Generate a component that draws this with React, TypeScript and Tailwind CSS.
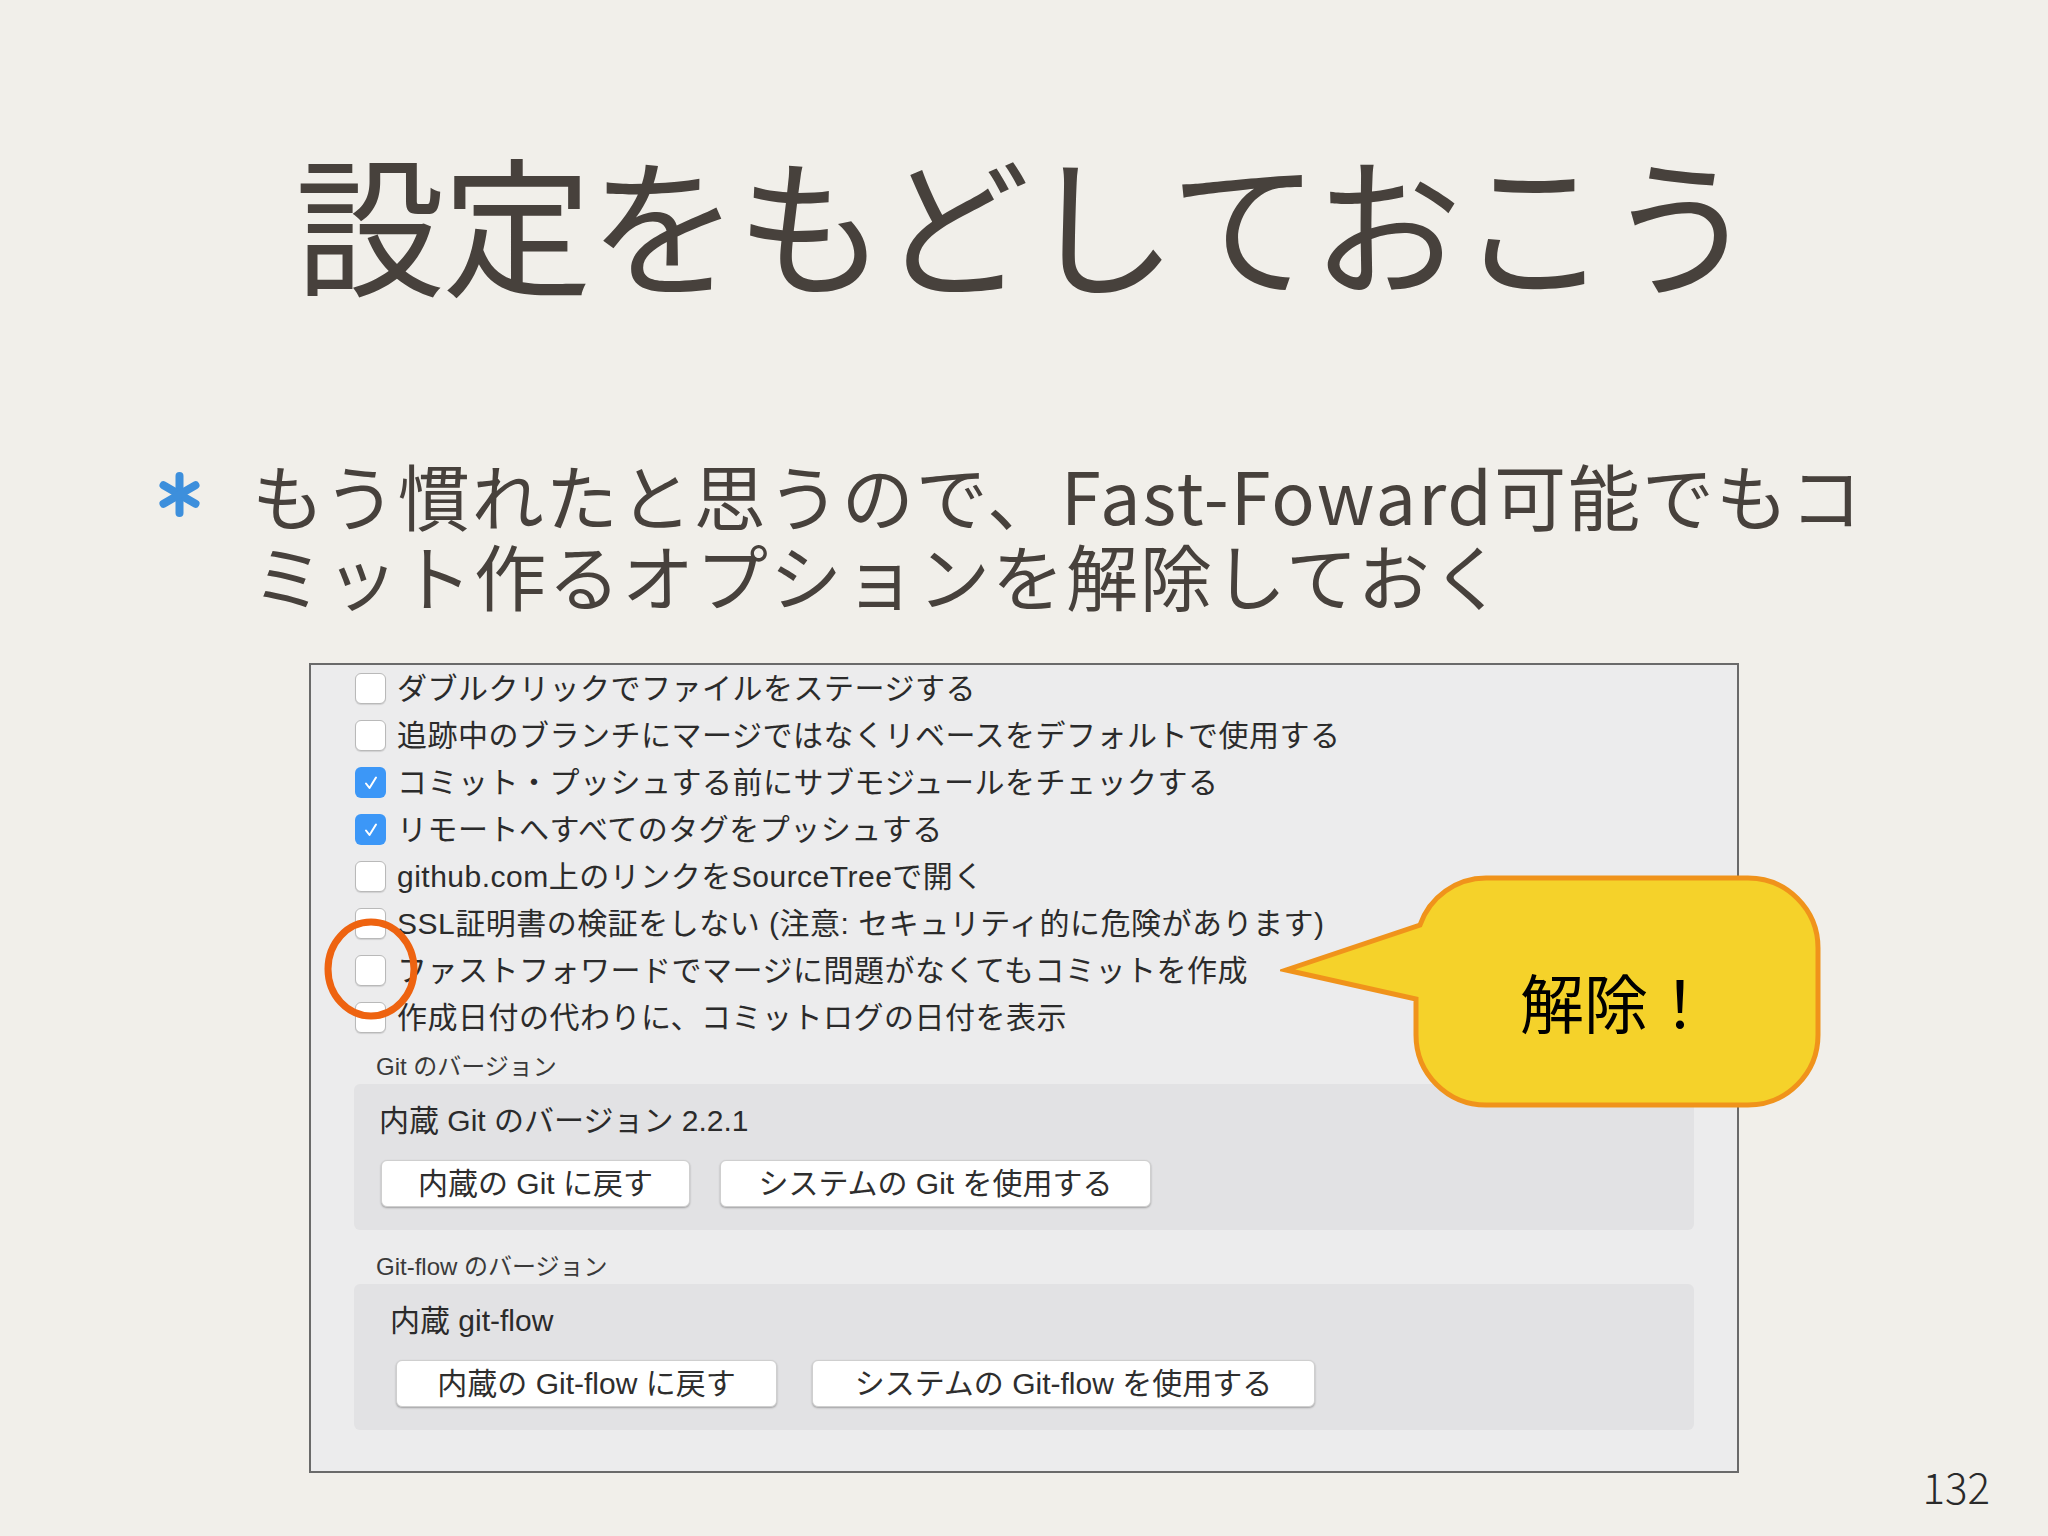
const rows = [
  { label: "ダブルクリックでファイルをステージする", checked: false },
  { label: "追跡中のブランチにマージではなくリベースをデフォルトで使用する", checked: false },
  { label: "コミット・プッシュする前にサブモジュールをチェックする", checked: true },
  { label: "リモートへすべてのタグをプッシュする", checked: true },
  { label: "github.com上のリンクをSourceTreeで開く", checked: false },
  { label: "SSL証明書の検証をしない (注意: セキュリティ的に危険があります)", checked: false },
  { label: "ファストフォワードでマージに問題がなくてもコミットを作成", checked: false },
  { label: "作成日付の代わりに、コミットログの日付を表示", checked: false },
];

function CheckBox({ checked }: { checked: boolean }) {
  if (checked) {
    return (
      <span className="flex h-[31px] w-[31px] shrink-0 items-center justify-center rounded-[6px] bg-[#3c97f7]">
        <svg viewBox="0 0 20 20" className="h-[20px] w-[20px]">
          <path d="M5 10.5 L8.5 15 L15 4.5" fill="none" stroke="white" strokeWidth="2" strokeLinecap="round" strokeLinejoin="round" />
        </svg>
      </span>
    );
  }
  return <span className="h-[31px] w-[31px] shrink-0 rounded-[6px] border border-[#b9b9b9] bg-white shadow-[0_1px_1px_rgba(0,0,0,0.12)]" />;
}

function Button({ label, width }: { label: string; width: string }) {
  return (
    <div
      className={`flex h-[47px] items-center justify-center rounded-[6px] border border-[#cfcfcf] bg-white text-[30px] text-[#2e2e2e] shadow-[0_1px_2px_rgba(0,0,0,0.3)] ${width}`}
    >
      {label}
    </div>
  );
}

function Asterisk() {
  return (
    <svg viewBox="0 0 45 45" className="mt-[18px] h-[45px] w-[45px] shrink-0">
      <g stroke="#3d8fdc" strokeWidth="8" strokeLinecap="round">
        <line x1="22.5" y1="4" x2="22.5" y2="41" />
        <line x1="6.5" y1="13.25" x2="38.5" y2="31.75" />
        <line x1="6.5" y1="31.75" x2="38.5" y2="13.25" />
      </g>
    </svg>
  );
}

export default function App() {
  return (
    <div className="relative h-[1536px] w-[2048px] overflow-hidden bg-[#f1efea] font-['Noto_Sans_CJK_JP',sans-serif] text-[#47413c]">
      <h1 className="pt-[145px] text-center text-[150px] font-normal leading-[150px] tracking-[-3px]">
        設定をもどしておこう
      </h1>

      <div className="ml-[157px] mt-[159px] flex gap-[50px]">
        <Asterisk />
        <p className="text-[72px] font-normal leading-[80px] tracking-[2px]">
          もう慣れたと思うので、Fast-Foward可能でもコ
          <br />
          ミット作るオプションを解除しておく
        </p>
      </div>

      {/* SourceTree settings screenshot */}
      <div className="ml-[309px] mt-[49px] h-[810px] w-[1430px] border-2 border-[#6a6a6a] bg-[#ececed] font-['Liberation_Sans','Noto_Sans_CJK_JP',sans-serif] text-[#2b2b2b]">
        <div className="flex flex-col pl-[44px]">
          {rows.map((row) => (
            <div key={row.label} className="flex h-[47px] items-center gap-[11px]">
              <CheckBox checked={row.checked} />
              <span className="text-[30px] leading-[36px] tracking-[0.5px]">{row.label}</span>
            </div>
          ))}
        </div>

        <p className="ml-[65px] mt-[11px] text-[24px] leading-[30px] text-[#3a3a3a]">Git のバージョン</p>
        <div className="ml-[43px] mt-[2px] h-[146px] w-[1340px] rounded-[6px] bg-[#e2e2e4] pl-[25px] pt-[19px]">
          <p className="text-[30px] leading-[36px]">内蔵 Git のバージョン 2.2.1</p>
          <div className="ml-[2px] mt-[21px] flex gap-[30px]">
            <Button label="内蔵の Git に戻す" width="w-[309px]" />
            <Button label="システムの Git を使用する" width="w-[431px]" />
          </div>
        </div>

        <p className="ml-[65px] mt-[22px] text-[24px] leading-[30px] text-[#3a3a3a]">Git-flow のバージョン</p>
        <div className="ml-[43px] mt-[2px] h-[146px] w-[1340px] rounded-[6px] bg-[#e2e2e4] pl-[36px] pt-[19px]">
          <p className="text-[30px] leading-[36px]">内蔵 git-flow</p>
          <div className="ml-[6px] mt-[21px] flex gap-[35px]">
            <Button label="内蔵の Git-flow に戻す" width="w-[381px]" />
            <Button label="システムの Git-flow を使用する" width="w-[503px]" />
          </div>
        </div>
      </div>

      {/* orange ring around the unchecked option */}
      <svg className="absolute left-[318px] top-[916px] h-[106px] w-[106px]" viewBox="0 0 106 106">
        <ellipse cx="53" cy="53" rx="43" ry="47" fill="none" stroke="#ee6310" strokeWidth="7" />
      </svg>

      {/* callout */}
      <div className="absolute left-[1280px] top-[870px] h-[242px] w-[545px]">
        <svg className="absolute inset-0 h-full w-full" viewBox="0 0 545 242">
          <path
            d="M206 8 H468 A70 70 0 0 1 538 78 V165 A70 70 0 0 1 468 235 H206 A70 70 0 0 1 136 165 V129 L6 100 L140 55 A70 70 0 0 1 206 8 Z"
            fill="#f5d22a"
            stroke="#f0931b"
            strokeWidth="5"
            strokeLinejoin="miter"
          />
        </svg>
        <div className="absolute left-[136px] top-[8px] flex h-[227px] w-[402px] items-center justify-center pr-[2px] pt-[16px] text-[64px] leading-none text-black">
          解除！
        </div>
      </div>

      <span className="absolute right-[58px] top-[1454px] text-[42px] font-light text-[#2a2a2a]">132</span>
    </div>
  );
}
